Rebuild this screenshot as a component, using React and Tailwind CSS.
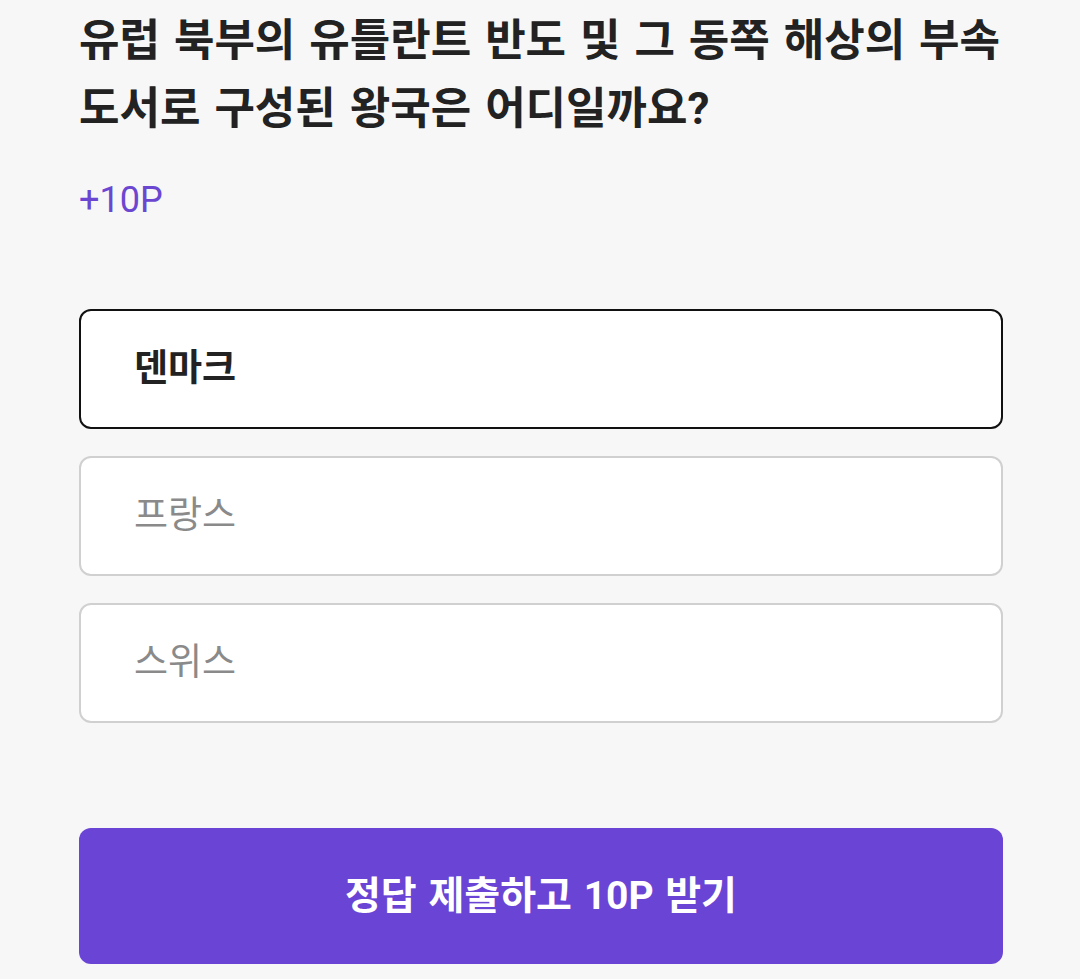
import React, { useState } from 'react';

const FONT = { fontFamily: 'Roboto, "Noto Sans CJK KR", sans-serif' };

const OPTIONS = ['덴마크', '프랑스', '스위스'];

const App = () => {
  const [selected, setSelected] = useState(0);

  return (
    <div className="min-h-[979px] w-[1080px] bg-[#f7f7f7]" style={FONT}>
      <div className="pl-[79px] pr-[77px] pt-[7px] w-full">
        <h1 className="whitespace-nowrap text-[44px] leading-[68px] font-bold text-[#222222] [word-spacing:3px]">
          유럽 북부의 유틀란트 반도 및 그 동쪽 해상의 부속
          <br />
          도서로 구성된 왕국은 어디일까요?
        </h1>
        <p className="mt-[35px] text-[36px] leading-[44px] text-[#6b46d1]">+10P</p>

        <div className="mt-[87px] flex flex-col gap-[27px]">
          {OPTIONS.map((label, index) => {
            const active = index === selected;
            return (
              <button
                key={label}
                type="button"
                onClick={() => setSelected(index)}
                className={
                  active
                    ? 'h-[120px] w-full rounded-[12px] border-2 border-[#111111] bg-white pl-[53px] text-left text-[37px] font-bold text-[#222222]'
                    : 'h-[120px] w-full rounded-[12px] border-2 border-[#d0d0d0] bg-white pl-[53px] text-left text-[37px] text-[#8a8a8a]'
                }
              >
                {label}
              </button>
            );
          })}
        </div>

        <button
          type="button"
          className="mt-[105px] flex h-[136px] w-full items-center justify-center rounded-[12px] bg-[#6a44d4] text-[39px] font-bold text-white [word-spacing:2px]"
        >
          정답 제출하고 10P 받기
        </button>
      </div>
    </div>
  );
};

export default App;
